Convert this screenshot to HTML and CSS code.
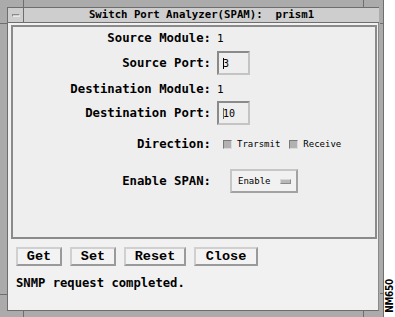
FILE: index.html
```html
<!DOCTYPE html>
<html>
<head>
<meta charset="utf-8">
<link rel="stylesheet" href="styles.css">
</head>
<body>
<div class="screen">
  <div class="frame">
    <span class="tick tick-t1"></span>
    <span class="tick tick-t2"></span>
    <span class="tick tick-b1"></span>
    <span class="tick tick-b2"></span>
    <span class="tick tick-l1"></span>
    <span class="tick tick-l2"></span>
    <span class="tick tick-r1"></span>
    <span class="tick tick-r2"></span>
    <div class="titlebar">
      <div class="menubtn"><span class="dash"></span></div>
      <div class="title">Switch Port Analyzer(SPAM):&nbsp; prism1</div>
    </div>
    <div class="client">
      <div class="panel">
        <div class="row r1"><span class="label">Source Module:</span><span class="value">1</span></div>
        <div class="row r2"><span class="label">Source Port:</span><span class="input"><span class="caret"></span>3</span></div>
        <div class="row r3"><span class="label">Destination Module:</span><span class="value">1</span></div>
        <div class="row r4"><span class="label">Destination Port:</span><span class="input"><span class="caret thin"></span>10</span></div>
        <div class="row r5"><span class="label">Direction:</span>
          <span class="checks">
            <span class="check"></span><span class="cklabel">Trarsmit</span>
            <span class="check"></span><span class="cklabel">Receive</span>
          </span>
        </div>
        <div class="row r6"><span class="label">Enable SPAN:</span>
          <span class="option">Enable<span class="indicator"></span></span>
        </div>
      </div>
      <div class="buttons">
        <span class="btn w46">Get</span>
        <span class="btn w46">Set</span>
        <span class="btn w62">Reset</span>
        <span class="btn w64">Close</span>
      </div>
      <div class="status">SNMP request completed.</div>
    </div>
  </div>
  <div class="strip"><span class="nm">NM650</span></div>
</div>
</body>
</html>
```
FILE: styles.css
```css
html, body {
  margin: 0;
  padding: 0;
  background: #ffffff;
}
.screen {
  display: flex;
  width: 395px;
  height: 317px;
  overflow: hidden;
}
.frame {
  position: relative;
  box-sizing: border-box;
  width: 385px;
  height: 317px;
  background: #ababab;
  padding: 7px 4px 0 8px;
  border-right: 1px solid #6e6e6e;
  display: flex;
  flex-direction: column;
}
.tick {
  position: absolute;
  background: #6e6e6e;
}
.tick-t1 { left: 23px; top: 0; width: 1px; height: 7px; }
.tick-t2 { left: 363px; top: 0; width: 1px; height: 7px; }
.tick-b1 { left: 23px; top: 311px; width: 1px; height: 6px; }
.tick-b2 { left: 363px; top: 311px; width: 1px; height: 6px; }
.tick-l1 { left: 0; top: 23px; width: 8px; height: 1px; }
.tick-l2 { left: 0; top: 294px; width: 8px; height: 1px; }
.tick-r1 { left: 380px; top: 23px; width: 4px; height: 1px; }
.tick-r2 { left: 380px; top: 293px; width: 4px; height: 1px; }

.titlebar {
  display: flex;
  height: 14px;
  background: #cecece;
  border-top: 1px solid #6e6e6e;
  border-bottom: 1px solid #6e6e6e;
  border-left: 1px solid #6e6e6e;
  margin-left: -1px;
}
.menubtn {
  width: 15px;
  border-right: 1px solid #6e6e6e;
  display: flex;
  align-items: center;
  justify-content: center;
}
.dash {
  display: block;
  width: 6px;
  height: 1px;
  border: 1px solid;
  border-color: #8a8a8a #e8e8e8 #e8e8e8 #8a8a8a;
  background: #cecece;
}
.title {
  flex: 1;
  text-align: center;
  font-family: "DejaVu Sans Mono", monospace;
  font-weight: bold;
  font-size: 10.7px;
  line-height: 14px;
  color: #000;
  white-space: pre;
}
.client {
  flex: 1;
  background: #f1f1f1;
  border-left: 1px solid #6e6e6e;
  border-right: 1px solid #8a8a8a;
  border-bottom: 1px solid #6e6e6e;
  margin-left: -1px;
  margin-bottom: 6px;
  padding: 2px 1px 0 3px;
  display: flex;
  flex-direction: column;
}
.panel {
  box-sizing: border-box;
  height: 214px;
  background: #eeeeee;
  border: 2px solid #8a8a8a;
  display: flex;
  flex-direction: column;
}
.row {
  display: flex;
  align-items: center;
}
.r1 { height: 22px; }
.r2 { height: 28px; }
.r3 { height: 24px; }
.r4 { height: 24px; }
.r5 { height: 38px; }
.r6 { height: 36px; }
.label {
  width: 198px;
  text-align: right;
  font-family: "DejaVu Sans Mono", monospace;
  font-weight: bold;
  font-size: 12.3px;
  color: #000;
  margin-right: 6px;
  white-space: pre;
}
.value {
  font-family: "DejaVu Sans Mono", monospace;
  font-size: 11px;
  color: #000;
}
.input {
  box-sizing: border-box;
  width: 33px;
  height: 24px;
  border: 2px solid;
  border-color: #8a8a8a #c4c4c4 #c4c4c4 #8a8a8a;
  background: #eeeeee;
  display: flex;
  align-items: center;
  padding-left: 4px;
  font-family: "DejaVu Sans Mono", monospace;
  font-size: 10px;
  color: #000;
}
.caret {
  display: inline-block;
  width: 1px;
  height: 11px;
  background: #000;
  margin-right: -1px;
}
.caret.thin { background: #666; }
.checks {
  display: flex;
  align-items: center;
  margin-left: 6px;
}
.check {
  box-sizing: border-box;
  width: 9px;
  height: 9px;
  background: #b2b2b2;
  border: 1px solid;
  border-color: #7a7a7a #dcdcdc #dcdcdc #7a7a7a;
  margin-right: 5px;
}
.cklabel {
  font-family: "DejaVu Sans Mono", monospace;
  font-size: 9px;
  color: #000;
  margin-right: 9px;
}
.option {
  box-sizing: border-box;
  width: 68px;
  height: 24px;
  margin-left: 13px;
  border: 2px solid;
  border-color: #c6c6c6 #a2a2a2 #a2a2a2 #c6c6c6;
  background: #f1f1f1;
  display: flex;
  align-items: center;
  padding-left: 6px;
  font-family: "DejaVu Sans Mono", monospace;
  font-size: 9px;
  color: #000;
}
.indicator {
  box-sizing: border-box;
  width: 11px;
  height: 5px;
  margin-left: 9px;
  border: 1px solid;
  border-color: #d8d8d8 #8a8a8a #8a8a8a #d8d8d8;
  background: #b8b8b8;
}
.buttons {
  display: flex;
  gap: 8px;
  margin-top: 8px;
  padding-left: 5px;
}
.btn {
  box-sizing: border-box;
  height: 19px;
  border: 2px solid;
  border-color: #d0d0d0 #9a9a9a #9a9a9a #d0d0d0;
  background: #f3f3f3;
  display: flex;
  align-items: center;
  justify-content: center;
  font-family: "Liberation Mono", monospace;
  font-weight: bold;
  font-size: 13.5px;
  color: #000;
}
.w46 { width: 46px; }
.w62 { width: 62px; }
.w64 { width: 64px; }
.status {
  margin-top: 10px;
  padding-left: 5px;
  font-family: "DejaVu Sans Mono", monospace;
  font-weight: bold;
  font-size: 12.2px;
  line-height: 14px;
  color: #000;
}
.strip {
  flex: 1;
  display: flex;
  flex-direction: column;
  justify-content: flex-end;
  align-items: center;
  padding-bottom: 4px;
}
.nm {
  writing-mode: vertical-rl;
  transform: rotate(180deg);
  font-family: "DejaVu Sans Condensed", "DejaVu Sans", sans-serif;
  font-weight: bold;
  font-size: 10px;
  color: #000;
  letter-spacing: -0.3px;
}
```
